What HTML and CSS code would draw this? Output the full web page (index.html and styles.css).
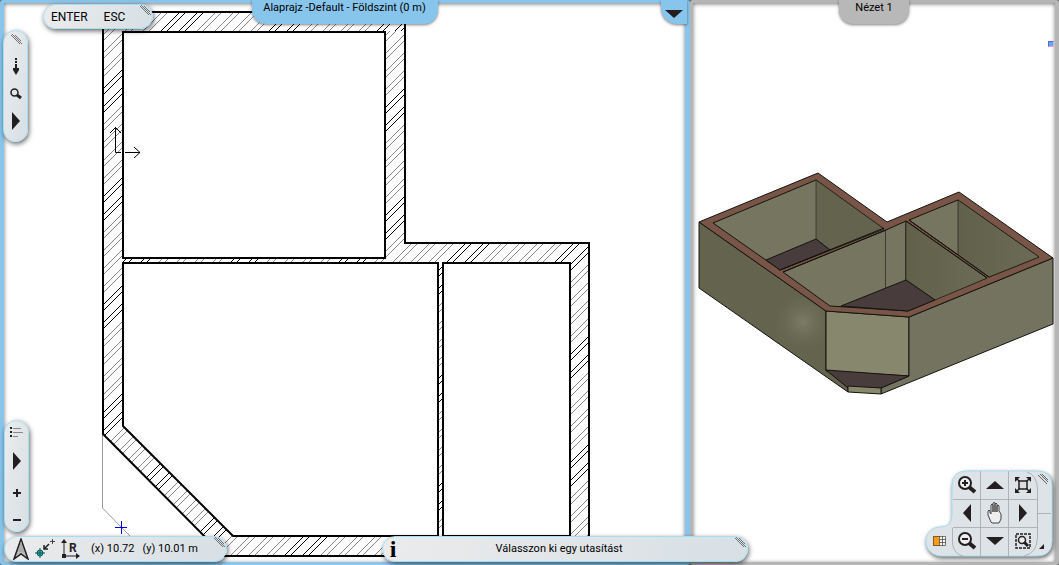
FILE: index.html
```html
<!DOCTYPE html>
<html lang="hu">
<head>
  <meta charset="UTF-8">
  <meta name="viewport" content="width=device-width, initial-scale=1.0">
  <title>Alaprajz - Földszint</title>
  <link rel="stylesheet" href="styles.css">
</head>
<body>
  <main class="workspace">
    <section class="pane plan-pane">
      <h2 class="tab plan-tab">Alaprajz -Default - Földszint (0 m)</h2>
      <button class="pane-menu" aria-label="Nézet menü">
        <svg width="18" height="9" viewBox="0 0 18 9"><path d="M0 0H18L9 8Z" fill="#231f20"/></svg>
      </button>
      <svg class="drawing" viewBox="0 0 690 565" role="img" aria-label="Alaprajz">
        <defs>
          <pattern id="hatch" width="108" height="108" patternUnits="userSpaceOnUse">
            <g shape-rendering="crispEdges">
              <path d="M85 -1L-1 85M91 -1L-1 91M103 -1L-1 103M109 -1L-1 109M109 83L83 109M109 89L89 109M109 101L101 109" stroke="#000"/>
              <path d="M13 -1L-1 13M19 -1L-1 19M31 -1L-1 31M37 -1L-1 37M49 -1L-1 49M55 -1L-1 55M67 -1L-1 67M73 -1L-1 73M109 11L11 109M109 17L17 109M109 29L29 109M109 35L35 109M109 47L47 109M109 53L53 109M109 65L65 109M109 71L71 109" stroke="#888"/>
            </g>
          </pattern>
          <pattern id="hatch-right" patternTransform="translate(-23 0)" href="#hatch"/>
        </defs>
        <g shape-rendering="crispEdges" stroke="none">
          <path d="M103 12H405V31H122V425L233 536H590V556H224L103 434Z" fill="url(#hatch)"/>
          <path d="M386 31H405V242H589V545H570V263H443V536H438V263H122V257H386Z" fill="url(#hatch-right)"/>
        </g>
        <path d="M102.500 434V508L131 537" fill="none" stroke="#999"/>
        <g fill="none" stroke="#000" stroke-width="2">
          <path d="M224 556L103 434V12H405V243H589V556H224"/>
          <path d="M123 32H385V258H123Z"/>
          <path d="M123 263H438V536H233L123 426Z"/>
          <path d="M443 263H570V536H443Z"/>
        </g>
        <g fill="none" stroke="#000">
          <path d="M115.500 127V152.500H121M125 152.500H140M110 133L115.500 127.500L121 133M134 147L140 152.500L134 158"/>
          <path d="M121.500 521V534M115 527.500H127" stroke="#0000d8"/>
        </g>
      </svg>
    </section>

    <section class="pane view-pane">
      <h2 class="tab view-tab">Nézet 1</h2>
      <span class="marker"></span>
      <svg class="drawing" viewBox="690 0 369 565" role="img" aria-label="Nézet 1">
        <defs>
          <radialGradient id="glow"><stop offset="0" stop-color="#7c7c67"/><stop offset="1" stop-color="#63634e" stop-opacity="0"/></radialGradient>
          <linearGradient id="shade" x1="0" x2="1"><stop offset="0" stop-color="#61614b"/><stop offset="1" stop-color="#6b6b56"/></linearGradient>
          <clipPath id="front-wall"><path d="M699 222L825 311V370L848 386L699 288Z"/></clipPath>
        </defs>
        <g stroke="#15140f" stroke-width="1" stroke-linejoin="round">
          <path d="M699 222L826 311V370L848 386V392L699 288Z" fill="#63634e"/>
          <circle cx="803" cy="322" r="34" fill="url(#glow)" stroke="none" clip-path="url(#front-wall)"/>
          <path d="M826 311V371L909 376V317Z" fill="#87876d"/>
          <path d="M909 317L1053 258V324L881 394V388L909 376Z" fill="#737360"/>
          <path d="M826 370L909 376L881 388H848Z" fill="#493c3c"/>
          <path d="M848 386L881 388V394L848 392Z" fill="#88886c"/>
          <path d="M699 222L818 173L887 222L959 192L1053 258L909 317L826 311Z" fill="#795548"/>
          <path d="M713 223L816 180L884 229L780 270Z" fill="#757560"/>
          <path d="M816 180V239L830 250L884 229Z" fill="#63634e" stroke-width=".5"/>
          <path d="M766 260L816 239L830 250L780 270Z" fill="#493c3c"/>
          <path d="M783 272L886 230L906 221L987 278L908 311L830 306Z" fill="#757560"/>
          <path d="M906 221L987 278L935 300L906 280Z" fill="url(#shade)" stroke-width=".5"/>
          <path d="M841 306L906 280L935 300L908 311Z" fill="#493c3c"/>
          <path d="M885.500 230V288M905.500 221V280" fill="none" stroke-width=".6"/>
          <path d="M909 220L958 200L1039 257L989 277Z" fill="#757560"/>
          <path d="M958 200V255L989 277L1039 257Z" fill="url(#shade)" stroke-width=".6"/>
          <path d="M780 270L884 228M783 272L886 230M906 221L987 278M909 220L989 277" fill="none"/>
        </g>
      </svg>
    </section>
  </main>

  <nav class="panel command-bar">
    <button>ENTER</button>
    <button>ESC</button>
    <svg class="grip" width="12" height="12" viewBox="0 0 12 12"><path d="M0 1L9 10M4 1L10 7M1 0L11 10"/></svg>
  </nav>

  <nav class="panel side-bar top-tools">
    <svg class="grip" width="12" height="12" viewBox="0 0 12 12"><path d="M0 1L9 10M4 1L10 7M1 0L11 10"/></svg>
    <button aria-label="Lefelé"><svg width="8" height="18" viewBox="0 0 8 18"><path d="M3 0H5V2H3ZM3 3H5V5H3ZM3 6H5V10H7V12L4 17L1 12V10H3Z"/></svg></button>
    <button aria-label="Keresés"><svg width="12" height="12" viewBox="0 0 12 12"><circle cx="4.500" cy="4.500" r="3.500" fill="none" stroke="#231f20" stroke-width="1.500"/><path d="M7 7L11 10" stroke="#231f20" stroke-width="3"/></svg></button>
    <button aria-label="Tovább"><svg width="8" height="18" viewBox="0 0 8 18"><path d="M0 0L8 9L0 18Z"/></svg></button>
  </nav>

  <nav class="panel side-bar bottom-tools">
    <button aria-label="Lista"><svg width="13" height="11" viewBox="0 0 13 11"><path d="M0 0H2V2H0ZM0 4H2V6H0ZM0 8H2V10H0Z"/><path d="M3 1.500H11M3 5.500H13M3 9.500H8" stroke="#888"/></svg></button>
    <button aria-label="Tovább"><svg width="8" height="18" viewBox="0 0 8 18"><path d="M0 0L8 9L0 18Z"/></svg></button>
    <button aria-label="Nagyítás"><svg width="8" height="8" viewBox="0 0 8 8"><path d="M3 0H5V3H8V5H5V8H3V5H0V3H3Z"/></svg></button>
    <button aria-label="Kicsinyítés"><svg width="8" height="8" viewBox="0 0 8 8"><path d="M0 3H8V5H0Z"/></svg></button>
  </nav>

  <div class="panel coord-bar">
    <button aria-label="Észak"><svg width="16" height="22" viewBox="0 0 16 22"><path d="M8 1L15 21L8 16L1 21Z" fill="#bbb" stroke="#231f20" stroke-width="1.500"/><path d="M8 3L11 14H5Z" fill="#aaa"/></svg></button>
    <button aria-label="Origó"><svg width="20" height="20" viewBox="0 0 20 20"><circle cx="5" cy="14" r="3" fill="#31b5b5" stroke="#155" /><path d="M5 9V19M0 14H10" stroke="#155"/><path d="M14 5L9 10M9 6V10H13" fill="none" stroke="#222" stroke-width="1.500"/><path d="M17.500 0V5M15 2.500H20" stroke="#444"/></svg></button>
    <button aria-label="Relatív"><svg width="20" height="20" viewBox="0 0 20 20"><path d="M3 2V17H18" fill="none" stroke="#231f20"/><path d="M0 4L3 0L6 4ZM15 14L19 17L15 20ZM1 15H5V19H1Z"/><text class="relative-mark" x="8" y="13">R</text></svg></button>
    <span class="coords"><span>(x) 10.72</span><span>(y) 10.01 m</span></span>
    <svg class="grip" width="12" height="12" viewBox="0 0 12 12"><path d="M0 1L9 10M4 1L10 7M1 0L11 10"/></svg>
  </div>

  <div class="panel message-bar">
    <b class="info">i</b>
    <p>Válasszon ki egy utasítást</p>
    <svg class="grip" width="12" height="12" viewBox="0 0 12 12"><path d="M0 1L9 10M4 1L10 7M1 0L11 10"/></svg>
  </div>

  <nav class="navigator">
    <svg class="navigator-shape" width="128" height="87" viewBox="0 0 128 87" aria-hidden="true">
      <path d="M42 1H112Q127 1 127 16V71Q127 86 112 86H15C-4 84-4 57 16 57Q27 57 27 45V16Q27 1 42 1Z" fill="#dde3e7" stroke="#a5def2"/>
      <path d="M28 29.500H112M28 57.500H112M55.500 1V86M83.500 1V86M112.500 19V68M112 43.500H126M102 2Q112 5 112.500 19M112.500 68Q112 83 99 86M27.500 58V74Q29 84 38 86" fill="none" stroke="#aeb3b5"/>
      <path d="M113 5L122 14M117 4L123 10M115 4L123 12" stroke="#444" stroke-width=".8"/>
      <path d="M119 74V79H114Z" fill="#231f20"/>
      <path d="M8 66H21V76H8Z" fill="#f6f6ee"/>
      <path d="M8 66H14V76H8Z" fill="#ff9b16"/>
      <path d="M8.500 66.500H20.500V75.500H8.500ZM14.500 66V76M17.500 66V76M14 69.500H21M14 72.500H21" fill="none" stroke="#44403b" stroke-width=".7"/>
    </svg>
    <button class="table-button" aria-label="Táblázat"></button>
    <div class="nav-grid">
      <button aria-label="Nagyítás"><svg width="20" height="20" viewBox="0 0 20 20"><circle cx="8" cy="8" r="6" fill="#eee" stroke="#231f20" stroke-width="2"/><path d="M5 8H11M8 5V11" stroke="#231f20" stroke-width="2"/><path d="M12 12L18 17" stroke="#231f20" stroke-width="4"/></svg></button>
      <button aria-label="Fel"><svg width="18" height="8" viewBox="0 0 18 8"><path d="M0 8L9 0L18 8Z"/></svg></button>
      <button aria-label="Teljes nézet"><svg width="16" height="16" viewBox="0 0 16 16"><path d="M4 4H12V12H4Z" fill="#ddd" stroke="#231f20" stroke-width="1.500"/><path d="M0 0H5L3 2L5 4L4 5L2 3L0 5ZM16 0V5L14 3L12 5L11 4L13 2L11 0ZM0 16V11L2 13L4 11L5 12L3 14L5 16ZM16 16H11L13 14L11 12L12 11L14 13L16 11Z"/></svg></button>
      <button aria-label="Balra"><svg width="8" height="18" viewBox="0 0 8 18"><path d="M8 0L0 9L8 18Z"/></svg></button>
      <button aria-label="Mozgatás"><svg width="16" height="22" viewBox="0 0 16 22"><path d="M4 20L1 13V9Q2 7 3 9V11L4 12V3Q5 1 6 3V10V1Q7 0 8 1V10V2Q9 0 10 2V10V4Q11 2 12 4V9L14 12V17L12 21H5Z" fill="#eee" stroke="#444"/></svg></button>
      <button aria-label="Jobbra"><svg width="8" height="18" viewBox="0 0 8 18"><path d="M0 0L8 9L0 18Z"/></svg></button>
      <button aria-label="Kicsinyítés"><svg width="20" height="20" viewBox="0 0 20 20"><circle cx="8" cy="8" r="6" fill="#eee" stroke="#231f20" stroke-width="2"/><path d="M5 8H11" stroke="#231f20" stroke-width="2"/><path d="M12 12L18 17" stroke="#231f20" stroke-width="4"/></svg></button>
      <button aria-label="Le"><svg width="18" height="8" viewBox="0 0 18 8"><path d="M0 0H18L9 8Z"/></svg></button>
      <button aria-label="Ablak nagyítása"><svg width="16" height="16" viewBox="0 0 16 16"><path d="M1 1H15V15H1Z" fill="none" stroke="#231f20" stroke-width="1.500" stroke-dasharray="3 1"/><circle cx="7" cy="7" r="3.500" fill="#eee" stroke="#231f20" stroke-width="1.500"/><path d="M9 9L13 13" stroke="#231f20" stroke-width="3"/></svg></button>
    </div>
  </nav>
</body>
</html>
```
FILE: styles.css
```css
* {
  box-sizing: border-box;
}
body {
  margin: 0;
  height: 100vh;
  position: relative;
  overflow: hidden;
  background-color: #666;
  color: #000;
  font-family: Roboto, sans-serif;
  font-size: 11px;
  line-height: 16px;
}
h2, p {
  margin: 0;
  font-size: 11px;
  font-weight: normal;
}
svg {
  display: block;
}
button {
  display: flex;
  align-items: center;
  justify-content: center;
  padding: 0;
  border: none;
  background: none;
  color: inherit;
  font: inherit;
  cursor: pointer;
}
.workspace {
  display: grid;
  grid-template-columns: 690fr 369fr;
  height: 100%;
}
.pane {
  position: relative;
  min-width: 0;
  border-style: solid;
  background-color: #fff;
  box-shadow: inset 0 1px 4px #777;
}
.plan-pane {
  border-color: #88c5ec;
  border-width: 3px 5px 3px 4px;
  border-radius: 3px;
}
.view-pane {
  border-color: #b5b5b5;
  border-width: 3px 4px 3px 3px;
  border-radius: 3px;
}
.drawing {
  position: absolute;
  top: -3px;
  left: -4px;
  width: calc(100% + 9px);
  height: calc(100% + 6px);
}
.view-pane .drawing {
  left: -3px;
  width: calc(100% + 7px);
}
.tab {
  position: absolute;
  z-index: 1;
  top: -3px;
  left: 50%;
  height: 24px;
  transform: translateX(-50%);
  border-radius: 0 0 14px 14px;
  text-align: center;
  white-space: nowrap;
  box-shadow: 0 1px 3px rgba(0, 0, 0, 0.5);
}
.plan-tab {
  width: 186px;
  background-color: #88c5ec;
}
.view-tab {
  width: 70px;
  background-color: #b8b8b8;
}
.pane-menu {
  position: absolute;
  z-index: 1;
  top: -3px;
  right: -2px;
  width: 26px;
  height: 24px;
  padding: 4px 0 0;
  background-color: #88c5ec;
  border-radius: 0 0 0 16px;
  box-shadow: 0 1px 3px rgba(0, 0, 0, 0.5);
}
.marker {
  position: absolute;
  z-index: 1;
  top: 38px;
  right: 1px;
  width: 6px;
  height: 6px;
  background-color: #64a8e8;
  border: 1px solid;
  border-color: #5569c8 #e9a3e9 #e9a3e9 #5569c8;
}
.panel {
  position: absolute;
  display: flex;
  align-items: center;
  background: linear-gradient(100deg, #ebebec, #d7e0e5);
  border: 1px solid #a5def2;
  border-radius: 14px;
  box-shadow: 1px 2px 5px rgba(0, 0, 0, 0.6);
}
.panel svg {
  fill: #231f20;
}
.grip path {
  fill: none;
  stroke: #555;
}
.panel .grip {
  position: absolute;
  top: 0;
  right: 0;
}
.panel .grip path {
  stroke-width: 0.8;
}
.command-bar {
  top: 4px;
  left: 43px;
  width: 110px;
  height: 25px;
  padding-left: 7px;
  gap: 16px;
  font-size: 12px;
}
.side-bar {
  left: 3px;
  width: 25px;
  flex-direction: column;
}
.panel.side-bar .grip {
  top: 3px;
  right: 4px;
}
.top-tools {
  top: 30px;
  padding: 27px 0 11px;
  gap: 12px;
}
.bottom-tools {
  left: 4px;
  bottom: 33px;
  padding: 6px 0 7px;
  gap: 19px;
}
.bottom-tools button:nth-child(2) {
  margin-top: -5px;
}
.coord-bar {
  left: 4px;
  bottom: 3px;
  width: 223px;
  height: 26px;
  padding-left: 8px;
  gap: 6px;
}
.coords {
  display: flex;
  gap: 8px;
  padding-left: 4px;
}
.relative-mark {
  font-size: 12px;
  font-weight: bold;
}
.message-bar {
  left: 382px;
  bottom: 3px;
  width: 366px;
  height: 26px;
}
.message-bar p {
  flex: 1;
  padding-right: 32px;
  text-align: center;
}
.info {
  width: 20px;
  text-align: center;
  font-family: "Liberation Serif", serif;
  font-size: 24px;
}
.navigator {
  position: absolute;
  right: 6px;
  bottom: 8px;
  width: 128px;
  height: 87px;
  padding: 1px 15px 0 28px;
}
.navigator-shape {
  position: absolute;
  top: 0;
  left: 0;
  overflow: visible;
  filter: drop-shadow(1px 2px 2px rgba(0, 0, 0, 0.6));
}
.table-button {
  position: absolute;
  left: 6px;
  bottom: 8px;
  width: 18px;
  height: 16px;
}
.nav-grid {
  position: relative;
  display: grid;
  grid-template-columns: repeat(3, 28px);
  grid-template-rows: repeat(3, 28px);
  fill: #231f20;
}
```
